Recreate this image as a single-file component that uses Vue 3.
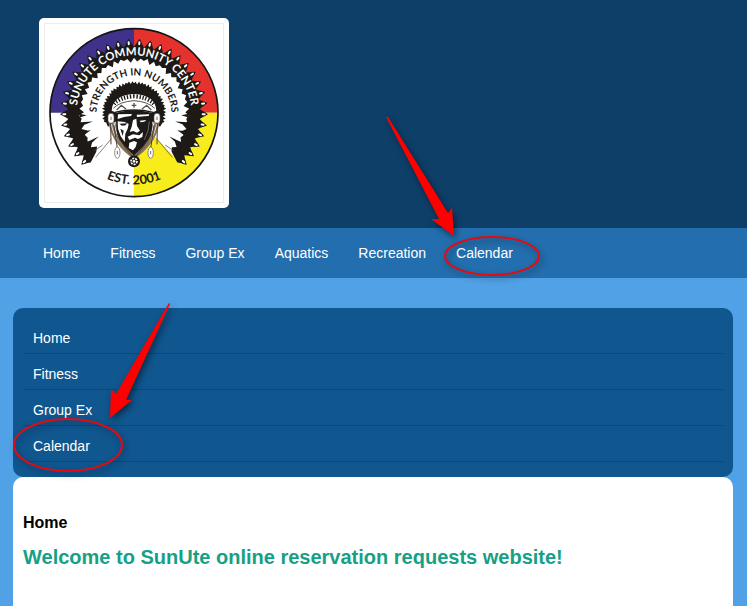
<script setup>
const topLinks = ['Home', 'Fitness', 'Group Ex', 'Aquatics', 'Recreation', 'Calendar']
const sideLinks = ['Home', 'Fitness', 'Group Ex', 'Calendar']

const CX = 300
const CY = 302
const point = (r, deg) => {
  const a = (deg * Math.PI) / 180
  return `${(CX + r * Math.cos(a)).toFixed(1)} ${(CY - r * Math.sin(a)).toFixed(1)}`
}

// Feathered war bonnet: scalloped outside edge, ragged inside edge.
const START = -49
const END = 229
const FEATHERS = 32
const step = (END - START) / FEATHERS
const tips = []
let outer = `M${point(198, START)}`
for (let i = 0; i < FEATHERS; i++) {
  const a = START + i * step
  outer += `L${point(206, a + step * 0.2)}Q${point(213, a + step * 0.3)} ${point(222, a + step * 0.5)}`
  outer += `Q${point(213, a + step * 0.7)} ${point(206, a + step * 0.8)}L${point(198, a + step)}`
  tips.push(`M${point(206, a + step / 2)}L${point(212, a + step / 2)}`)
}
const inner = []
const RAGS = 76
for (let i = RAGS; i >= 0; i--) {
  const a = START + 3 + (i * (END - START - 6)) / RAGS
  inner.push(point(i % 2 ? 150 + (i % 3) * 4 : 162 + (i % 5), a))
}
const bonnet = `${outer}L${inner.join('L')}Z`

// Short black barbs reaching inwards on the lower feathers.
const barbs = [[-34, 128], [-22, 140], [-12, 126], [-3, 142], [183, 142], [192, 126], [202, 140], [214, 128]]
  .map(([a, r]) => `M${point(164, a - 2)}L${point(r, a)}L${point(164, a + 2)}Z`)
  .join('')

// Ruffled crown of hair.
const hair = []
for (let i = 0; i <= 72; i++) {
  const a = ((-20 + (i * 220) / 72) * Math.PI) / 180
  const r = i % 2 ? 97 - (i % 3) : 91 - (i % 5)
  hair.push(`${(300 + r * Math.cos(a)).toFixed(1)} ${(302 - r * 0.98 * Math.sin(a)).toFixed(1)}`)
}
const crown = `M${hair.join('L')}L222 344L240 330L300 320L360 330L378 344Z`
</script>

<template>
  <div class="page">
    <header class="banner">
      <a class="logo" href="#" aria-label="SunUte Community Center">
        <svg viewBox="30 33 540 540" role="img" aria-hidden="true">
          <defs>
            <path id="arc-outer" d="M128 302A172 172 0 0 1 472 302" />
            <path id="arc-inner" d="M188 302A112 112 0 0 1 412 302" />
            <path id="arc-bottom" d="M85 302A215 215 0 0 0 515 302" />
          </defs>
          <path d="M300 302V50A252 252 0 0 0 48 302Z" fill="#40318a" />
          <path d="M300 302V50A252 252 0 0 1 552 302Z" fill="#e5322d" />
          <path d="M300 302V554A252 252 0 0 0 552 302Z" fill="#f8ec1d" />
          <path d="M300 302L368 380L422 436A180 180 0 1 0 178 436L232 380Z" fill="#fff" />
          <circle cx="300" cy="302" r="252" fill="none" stroke="#151313" stroke-width="5" />
          <path :d="bonnet" fill="#1c1917" />
          <path :d="barbs" fill="#1c1917" />
          <path v-for="tip in tips" :key="tip" :d="tip" stroke="#fff" stroke-width="6" stroke-linecap="round" />
          <path d="M232 380L185 436M206 399L180 417M368 380L415 436M394 399L420 417" stroke="#4a423a" stroke-width="2" />

          <text class="ring-text" fill="#fff" font-size="34">
            <textPath href="#arc-outer" startOffset="50%" text-anchor="middle">SUNUTE COMMUNITY CENTER</textPath>
          </text>
          <text class="ring-text" fill="#1c1917" font-size="30">
            <textPath href="#arc-inner" startOffset="50%" text-anchor="middle">STRENGTH IN NUMBERS</textPath>
          </text>
          <text class="ring-text" fill="#1c1917" font-size="38">
            <textPath href="#arc-bottom" startOffset="50%" text-anchor="middle">EST. 2001</textPath>
          </text>

          <path :d="crown" fill="#1c1917" />
          <path d="M245 300H355L354 350Q350 390 332 408L300 432L268 408Q250 385 247 350Z" fill="#1c1917" />
          <path d="M233 296Q235 250 300 246Q365 250 367 296L353 302Q300 287 247 302Z" fill="#fff" />
          <path d="M240 276Q258 256 300 253Q342 256 360 276" fill="none" stroke="#1c1917" stroke-width="12" stroke-dasharray="4 5" />
          <path d="M238 289Q257 269 300 266Q343 269 362 289" fill="none" stroke="#5c5148" stroke-width="3" />
          <path d="M248 294L262 280L276 291M324 291L338 280L352 294M293 280H307M300 273V287" fill="none" stroke="#5c5148" stroke-width="4" />
          <path d="M242 301Q300 287 358 301" fill="none" stroke="#1c1917" stroke-width="4" />
          <!-- face highlights -->
          <path d="M252 307L294 306L291 312L270 315L251 321Z" fill="#fff" />
          <path d="M308 308L346 307L344 312L330 313L309 315Z" fill="#fff" />
          <path d="M251 328L272 330L284 336L281 350L274 365L272 390L260 373L252 350Z" fill="#fff" />
          <path d="M297 324L307 320L309 342L318 356L309 362L298 357L287 360L293 344Z" fill="#fff" />
          <path d="M317 326L337 324L331 329L320 331Z" fill="#fff" />
          <path d="M281 374L297 367L316 370L327 360L325 375L312 381L303 377L286 384Z" fill="#fff" />
          <path d="M286 392L300 387L309 391L305 405L297 415L284 408Z" fill="#fff" />
          <path d="M256 335L279 334L275 340L264 341ZM259 350L269 356L266 372Z" fill="#1c1917" />
          <path d="M346 328L342 357L331 383" fill="none" stroke="#8f887f" stroke-width="2" />
          <!-- side ornaments and beadwork -->
          <path d="M226 328Q232 369 254 395Q272 419 298 436M235 328Q240 371 267 402L300 435M374 328Q368 369 346 395Q328 419 302 436M365 328Q360 371 333 402L300 435" fill="none" stroke="#83705d" stroke-width="6" />
          <path d="M242 328Q247 380 300 440M358 328Q353 380 300 440" fill="none" stroke="#3a3027" stroke-width="2" />
          <path d="M230 330L231 397M240 340L250 410M370 330L369 397M360 340L350 410" fill="none" stroke="#4d4132" stroke-width="3" />
          <g fill="#fff" stroke="#5c5148" stroke-width="2">
            <rect x="222" y="304" width="18" height="30" rx="9" />
            <rect x="360" y="304" width="18" height="30" rx="9" />
            <ellipse cx="250" cy="422" rx="8" ry="17" />
            <ellipse cx="350" cy="422" rx="8" ry="17" />
          </g>
          <path d="M231 314V324M369 314V324M250 417V427M350 417V427" stroke="#74695e" stroke-width="3" />
          <circle cx="300" cy="448" r="18" fill="#1c1917" />
          <circle cx="300" cy="448" r="9" fill="none" stroke="#fff" stroke-width="5" stroke-dasharray="6 3" />
          <circle cx="300" cy="448" r="4" fill="#fff" />
          <rect x="31" y="34" width="538" height="538" fill="none" stroke="#e9e9e9" stroke-width="3" />
        </svg>
      </a>
    </header>

    <nav class="topnav" aria-label="Main">
      <a v-for="link in topLinks" :key="link" href="#">{{ link }}</a>
    </nav>

    <div class="content">
      <nav class="sidenav" aria-label="Section">
        <ul>
          <li v-for="link in sideLinks" :key="link"><a href="#">{{ link }}</a></li>
        </ul>
      </nav>
      <main class="card">
        <h2>Home</h2>
        <h1>Welcome to SunUte online reservation requests website!</h1>
      </main>
    </div>

    <svg class="marks" aria-hidden="true">
      <g class="arrow">
        <path d="M386 117L388 117L448 213L452 208L454 236L431 219L439 219Z" />
        <path d="M169 303L170 304L126 400L132 400L110 418L111 389L116 394Z" />
      </g>
      <g class="ring">
        <ellipse cx="492" cy="256" rx="47" ry="19" />
        <ellipse cx="68" cy="445" rx="54" ry="26" />
      </g>
    </svg>
  </div>
</template>

<style>
body {
  margin: 0;
  background: #51a1e6;
}
</style>

<style scoped>
.page {
  position: relative;
  display: flex;
  flex-direction: column;
  min-height: 100vh;
  font-family: "Liberation Sans", Arial, sans-serif;
  font-size: 14px;
  line-height: 20px;
  color: #000;
}

a {
  color: #fff;
  text-decoration: none;
}

.banner {
  display: flex;
  padding: 18px 39px 20px;
  background: #0e3f69;
}

.logo {
  display: block;
  padding: 5px;
  border-radius: 5px;
  background: #fff;
}

.logo svg {
  display: block;
  width: 180px;
  height: 180px;
}

.ring-text {
  font-family: Lato, "Open Sans", sans-serif;
  font-weight: 700;
}

.topnav {
  display: flex;
  flex-wrap: wrap;
  gap: 0 30px;
  padding: 15px 43px;
  background: #236eae;
}

.content {
  display: flex;
  flex: 1;
  flex-direction: column;
  padding: 30px 14px 0 13px;
}

.sidenav {
  padding: 10px 10px 15px;
  border-radius: 10px;
  background: #10568f;
}

.sidenav ul {
  margin: 0;
  padding: 0;
  list-style: none;
}

.sidenav li {
  border-bottom: 1px solid #0e477a;
}

.sidenav a {
  display: block;
  padding: 10px 10px 5px;
}

.card {
  flex: 1;
  padding: 36px 10px 10px;
  border-radius: 10px 10px 0 0;
  background: #fff;
}

h1,
h2 {
  margin: 0;
}

h2 {
  margin-bottom: 14px;
  font-size: 16px;
}

h1 {
  font-size: 20px;
  color: #16a085;
}

.marks {
  position: absolute;
  inset: 0;
  width: 100%;
  height: 100%;
  pointer-events: none;
}

.arrow {
  fill: #f00;
  filter: drop-shadow(2px 3px 3px rgba(0, 0, 0, 0.5));
}

.ring {
  fill: none;
  stroke: #e60a0f;
  stroke-width: 2;
  filter: drop-shadow(2px 3px 3px rgba(0, 0, 0, 0.4));
}
</style>
